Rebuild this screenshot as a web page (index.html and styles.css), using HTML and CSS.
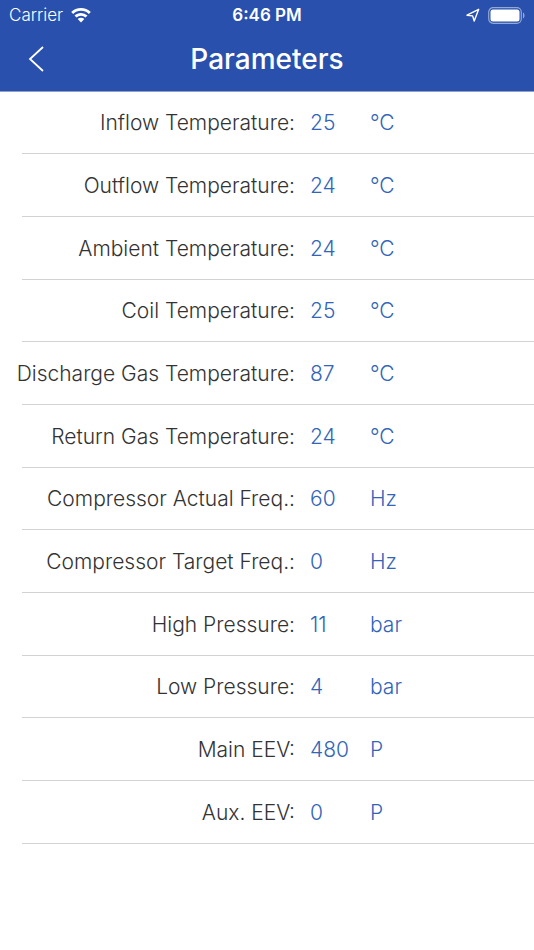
FILE: index.html
```html
<!DOCTYPE html>
<html lang="en">
<head>
  <meta charset="UTF-8">
  <meta name="viewport" content="width=device-width, initial-scale=1.0">
  <title>Parameters</title>
  <link rel="stylesheet" href="styles.css">
</head>
<body>
  <header class="header">
    <div class="status-bar">
      <div class="carrier">
        <span>Carrier</span>
        <svg width="20" height="15" viewBox="0 0 20 15" fill="#fff">
          <path d="M10 0C6.200 0 2.700 1.500 0.200 3.900L2.200 6A11.200 11.200 0 0 1 17.800 6L19.800 3.900A14.200 14.200 0 0 0 10 0Z"/>
          <path d="M10 4.900C7.500 4.900 5.200 5.900 3.500 7.400L5.500 9.500A6.600 6.600 0 0 1 14.500 9.500L16.500 7.400A9.500 9.500 0 0 0 10 4.900Z"/>
          <path d="M10 9.700C8.700 9.700 7.600 10.200 6.700 10.900L10 14.400L13.300 10.900A5 5 0 0 0 10 9.700Z"/>
        </svg>
      </div>
      <div class="time">6:46 PM</div>
      <div class="indicators">
        <svg width="14" height="14" viewBox="0 0 14 14" fill="none" stroke="#fff" stroke-width="1.400" stroke-linejoin="round">
          <path d="M12.700 1.300L1 7.200L6.600 7.900L8.200 13Z"/>
        </svg>
        <svg width="37" height="17" viewBox="0 0 37 17">
          <rect x="0.700" y="0.700" width="32.600" height="15.600" rx="4.500" fill="none" stroke="#fff" stroke-opacity="0.500" stroke-width="1.200"/>
          <rect x="2.500" y="2.500" width="29" height="12" rx="2.500" fill="#fff"/>
          <path d="M35 5.500C37 6.500 37 10.500 35 11.500Z" fill="#fff" fill-opacity="0.500"/>
        </svg>
      </div>
    </div>
    <div class="navbar">
      <button class="back" type="button" aria-label="Back">
        <svg width="16" height="26" viewBox="0 0 16 26" fill="none" stroke="#fff" stroke-width="1.800">
          <path d="M15 1L2 13L15 25"/>
        </svg>
      </button>
      <h1>Parameters</h1>
    </div>
  </header>

  <main>
    <dl class="params">
      <div class="row"><dt>Inflow Temperature:</dt><dd class="value">25</dd><dd>°C</dd></div>
      <div class="row"><dt>Outflow Temperature:</dt><dd class="value">24</dd><dd>°C</dd></div>
      <div class="row"><dt>Ambient Temperature:</dt><dd class="value">24</dd><dd>°C</dd></div>
      <div class="row"><dt>Coil Temperature:</dt><dd class="value">25</dd><dd>°C</dd></div>
      <div class="row"><dt>Discharge Gas Temperature:</dt><dd class="value">87</dd><dd>°C</dd></div>
      <div class="row"><dt>Return Gas Temperature:</dt><dd class="value">24</dd><dd>°C</dd></div>
      <div class="row"><dt>Compressor Actual Freq.:</dt><dd class="value">60</dd><dd>Hz</dd></div>
      <div class="row"><dt>Compressor Target Freq.:</dt><dd class="value">0</dd><dd>Hz</dd></div>
      <div class="row"><dt>High Pressure:</dt><dd class="value">11</dd><dd>bar</dd></div>
      <div class="row"><dt>Low Pressure:</dt><dd class="value">4</dd><dd>bar</dd></div>
      <div class="row"><dt>Main EEV:</dt><dd class="value">480</dd><dd>P</dd></div>
      <div class="row"><dt>Aux. EEV:</dt><dd class="value">0</dd><dd>P</dd></div>
    </dl>
  </main>
</body>
</html>
```
FILE: styles.css
```css
body {
  margin: 0;
  background-color: #fff;
  font-family: Inter, "Liberation Sans", sans-serif;
  color: #333;
}

.header {
  background-color: #2850ac;
  border-bottom: 1px solid #8b9fc9;
  color: #fff;
}

.status-bar {
  display: grid;
  grid-template-columns: 1fr auto 1fr;
  align-items: center;
  height: 30px;
  padding: 0 9px;
  font-size: 17px;
}

.carrier,
.indicators {
  display: flex;
  align-items: center;
  gap: 8px;
}

.carrier {
  font-weight: 350;
}

.indicators {
  justify-content: flex-end;
}

.time {
  font-weight: 600;
}

.navbar {
  display: grid;
  grid-template-columns: 72px 1fr 72px;
  align-items: center;
  height: 58px;
  padding-bottom: 3px;
}

.navbar h1 {
  margin: 0;
  font-size: 28px;
  font-weight: 500;
  line-height: 34px;
  text-align: center;
}

.back {
  display: flex;
  justify-content: center;
  padding: 8px;
  border: none;
  background: none;
  cursor: pointer;
}

.params {
  margin: 0 0 0 22px;
}

.row {
  display: grid;
  grid-template-columns: 273px 75px 1fr;
  align-items: center;
  box-sizing: border-box;
  height: 63px;
  border-bottom: 1px solid #d3d3d3;
  font-size: 21px;
  font-weight: 350;
}

.row:nth-child(3n+1) {
  height: 62px;
}

.row dt {
  display: flex;
  justify-content: flex-end;
  white-space: nowrap;
}

.row dd {
  margin: 0;
  color: #3265b8;
}

.row .value {
  padding-left: 15px;
}
```
